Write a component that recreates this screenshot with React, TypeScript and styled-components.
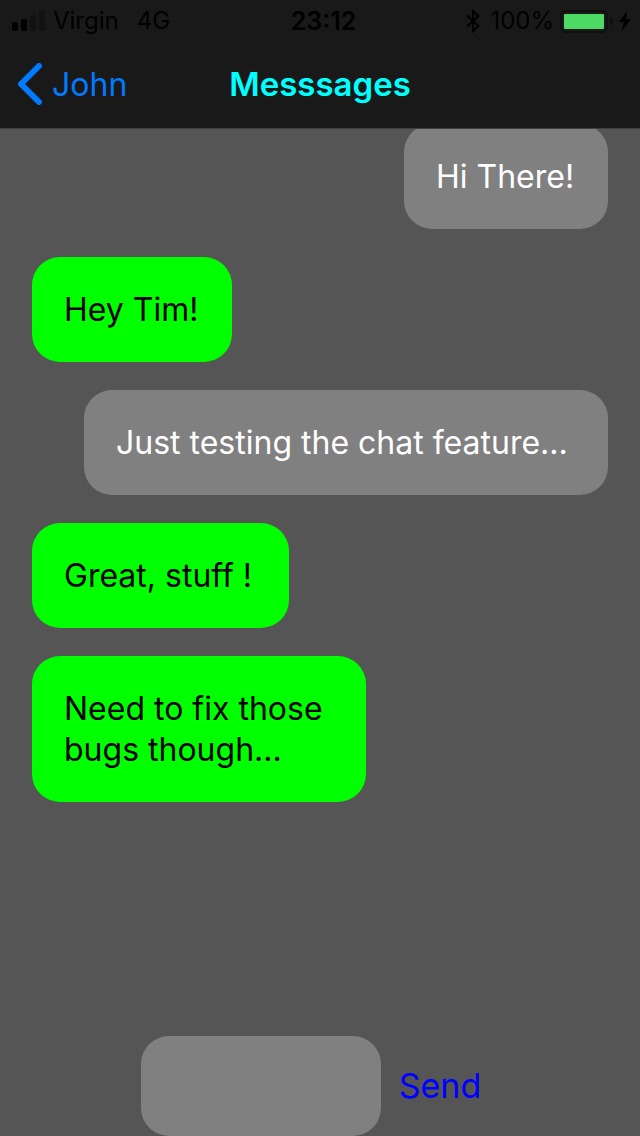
import React from "react";
import styled, { createGlobalStyle } from "styled-components";

const GlobalStyle = createGlobalStyle`
  *, *::before, *::after { box-sizing: border-box; }
  body {
    margin: 0;
    background: #555555;
    font-family: Inter, "Liberation Sans", sans-serif;
  }
`;

const Screen = styled.div`
  display: flex;
  flex-direction: column;
  min-height: 100vh;
  background: #555555;
`;

const Header = styled.header`
  position: sticky;
  top: 0;
  z-index: 1;
  background: #191919;
  border-bottom: 1px solid #404040;
`;

const StatusBar = styled.div`
  display: grid;
  grid-template-columns: 1fr auto 1fr;
  align-items: center;
  height: 40px;
  padding: 0 9px 0 12px;
  color: #000000;
  font-size: 24px;
  line-height: 42px;
`;

const StatusGroup = styled.div<{ $end?: boolean }>`
  display: flex;
  align-items: center;
  justify-content: ${(p) => (p.$end ? "flex-end" : "flex-start")};
  gap: ${(p) => (p.$end ? 6 : 8)}px;
`;

const Carrier = styled.span`
  margin-right: 10px;
`;

const Charge = styled.span`
  margin-left: 4px;
`;

const Clock = styled.time`
  padding-left: 4px;
  font-size: 25px;
  font-weight: 600;
`;

const NavBar = styled.nav`
  display: grid;
  grid-template-columns: 1fr auto 1fr;
  align-items: center;
  height: 88px;
  padding: 0 16px;
`;

const BackButton = styled.button`
  display: flex;
  align-items: center;
  justify-self: start;
  gap: 8px;
  padding: 0;
  border: 0;
  background: none;
  color: #007aff;
  font: inherit;
  font-size: 32px;
  line-height: 41px;
  cursor: pointer;
`;

const Title = styled.h1`
  margin: 0;
  color: #00ffff;
  font-size: 33px;
  font-weight: 600;
  line-height: 41px;
`;

const MessageList = styled.ol`
  display: flex;
  flex: 1;
  flex-direction: column;
  gap: 28px;
  margin: -5px 0 0;
  padding: 0 32px 28px;
  list-style: none;
`;

const Bubble = styled.li<{ $mine: boolean; $width: number }>`
  align-self: ${(p) => (p.$mine ? "flex-end" : "flex-start")};
  width: ${(p) => p.$width}px;
  max-width: 100%;
  padding: 32px;
  border-radius: 28px;
  background: ${(p) => (p.$mine ? "#808080" : "#00ff00")};
  color: ${(p) => (p.$mine ? "#ffffff" : "#000000")};
  font-size: 32px;
  line-height: 41px;
`;

const Composer = styled.form`
  display: flex;
  align-items: center;
  justify-content: center;
  gap: 18px;
  padding-right: 18px;
`;

const MessageInput = styled.input`
  width: 240px;
  height: 100px;
  padding: 0 28px;
  border: 0;
  border-radius: 28px;
  outline: none;
  background: #808080;
  color: #ffffff;
  font: inherit;
  font-size: 32px;
`;

const SendButton = styled.button`
  padding: 0;
  border: 0;
  background: none;
  color: #0000ff;
  font: inherit;
  font-size: 34px;
  line-height: 44px;
  cursor: pointer;
`;

const SignalIcon = () => (
  <svg width="33" height="20" viewBox="0 0 33 20" aria-hidden="true">
    <rect x="0" y="11" width="6" height="9" rx="2" fill="#000000" />
    <rect x="9" y="8" width="6" height="12" rx="2" fill="#000000" />
    <rect x="18" y="4" width="6" height="16" rx="2" fill="#121212" />
    <rect x="27" y="0" width="6" height="20" rx="2" fill="#121212" />
  </svg>
);

const BluetoothIcon = () => (
  <svg width="14" height="24" viewBox="0 0 14 24" fill="none" stroke="#000000" strokeWidth="2" aria-hidden="true">
    <path d="M1 6.5 12.5 17 7 22V2l5.500 5L1 17.500" />
  </svg>
);

const BatteryIcon = () => (
  <svg width="53" height="24" viewBox="0 0 53 24" aria-hidden="true">
    <rect x="1" y="2" width="46" height="21" rx="5" fill="none" stroke="#101010" strokeWidth="2" />
    <rect x="4" y="5" width="40" height="15" rx="1" fill="#4cd964" />
    <path d="M50 8q3 1.500 3 4.500t-3 4.500z" fill="#101010" />
  </svg>
);

const BoltIcon = () => (
  <svg width="12" height="20" viewBox="0 0 12 20" fill="#000000" aria-hidden="true">
    <path d="M8 0 0 11h5L3 20l9-12H7z" />
  </svg>
);

const BackIcon = () => (
  <svg width="28" height="42" viewBox="0 0 28 42" fill="none" stroke="currentColor" strokeWidth="6" strokeLinecap="round" strokeLinejoin="round" aria-hidden="true">
    <path d="M23 3 5 21l18 18" />
  </svg>
);

const messages = [
  { text: "Hi There!", mine: true, width: 204 },
  { text: "Hey Tim!", mine: false, width: 200 },
  { text: "Just testing the chat feature...", mine: true, width: 524 },
  { text: "Great, stuff !", mine: false, width: 257 },
  { text: "Need to fix those bugs though...", mine: false, width: 334 },
];

export default function App() {
  return (
    <>
      <GlobalStyle />
      <Screen>
        <Header>
          <StatusBar>
            <StatusGroup>
              <SignalIcon />
              <Carrier>Virgin</Carrier>
              <span>4G</span>
            </StatusGroup>
            <Clock>23:12</Clock>
            <StatusGroup $end>
              <BluetoothIcon />
              <Charge>100%</Charge>
              <BatteryIcon />
              <BoltIcon />
            </StatusGroup>
          </StatusBar>
          <NavBar>
            <BackButton type="button">
              <BackIcon />
              John
            </BackButton>
            <Title>Messsages</Title>
          </NavBar>
        </Header>
        <MessageList>
          {messages.map((m) => (
            <Bubble key={m.text} $mine={m.mine} $width={m.width}>
              {m.text}
            </Bubble>
          ))}
        </MessageList>
        <Composer onSubmit={(e) => e.preventDefault()}>
          <MessageInput type="text" aria-label="Message" />
          <SendButton type="submit">Send</SendButton>
        </Composer>
      </Screen>
    </>
  );
}
